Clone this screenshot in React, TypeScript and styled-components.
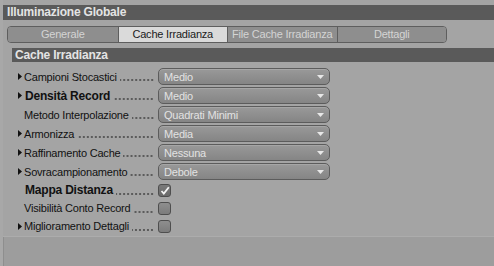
import styled, { createGlobalStyle } from "styled-components";

const Global = createGlobalStyle`
    body {
        margin: 0;
        background: #9d9d9d;
        font-family: "Liberation Sans", Arial, sans-serif;
        font-size: 11px;
        letter-spacing: -0.2px;
    }
`

const tabs = ["Generale", "Cache Irradianza", "File Cache Irradianza", "Dettagli"]

type Field =
    | { label: string; bold?: boolean; arrow?: boolean; kind: "select"; value: string }
    | { label: string; bold?: boolean; arrow?: boolean; kind: "check"; checked: boolean }

const fields: Field[] = [
    { label: "Campioni Stocastici", arrow: true, kind: "select", value: "Medio" },
    { label: "Densità Record", arrow: true, bold: true, kind: "select", value: "Medio" },
    { label: "Metodo Interpolazione", kind: "select", value: "Quadrati Minimi" },
    { label: "Armonizza", arrow: true, kind: "select", value: "Media" },
    { label: "Raffinamento Cache", arrow: true, kind: "select", value: "Nessuna" },
    { label: "Sovracampionamento", arrow: true, kind: "select", value: "Debole" },
    { label: "Mappa Distanza", bold: true, kind: "check", checked: true },
    { label: "Visibilità Conto Record", kind: "check", checked: false },
    { label: "Miglioramento Dettagli", arrow: true, kind: "check", checked: false },
]

const App = () => {
    return (<Frame>
        <Global />
        <TopStrip />
        <TitleBar>Illuminazione Globale</TitleBar>
        <Panel>
            <TabBar>
                {tabs.map((t, i) => <Tab key={t} $active={i === 1}>{t}</Tab>)}
            </TabBar>
            <Section>Cache Irradianza</Section>
            <Rows>
                {fields.map(f => (
                    <Row key={f.label} $tall={f.kind === "select"}>
                        <LabelCell>
                            <Arrow>{f.arrow ? <svg width="4" height="7" viewBox="0 0 4 7"><path d="M0 0 L4 3.5 L0 7 Z" fill="#111" /></svg> : null}</Arrow>
                            <Label $bold={f.bold}>{f.label}</Label>
                            <Leader />
                        </LabelCell>
                        {f.kind === "select"
                            ? <Select>
                                <span>{f.value}</span>
                                <svg width="7" height="4" viewBox="0 0 7 4"><path d="M0 0 L7 0 L3.5 4 Z" fill="#e8e8e8" /></svg>
                            </Select>
                            : <Check $on={f.checked}>
                                {f.checked ? <svg width="10" height="9" viewBox="0 0 10 9"><path d="M1.5 5 L3.8 7.5 L8.8 1.2" stroke="#f4f4f4" strokeWidth="1.8" fill="none" /></svg> : null}
                            </Check>}
                    </Row>
                ))}
            </Rows>
        </Panel>
    </Frame>)
}

const Frame = styled.div`
    width: 494px;
    height: 266px;
    display: flex;
    flex-direction: column;
    border-left: 3px solid #a8a8a8;
    box-shadow: inset 1px 0 0 #8e8e8e;
    box-sizing: border-box;
    overflow: hidden;
`

const TopStrip = styled.div`
    height: 5px;
    background: #a4a4a4;
`

const TitleBar = styled.div`
    height: 15px;
    line-height: 15px;
    background: #5a5a5a;
    color: #e4e4e4;
    font-weight: bold;
    font-size: 12px;
    padding-left: 4px;
`

const Panel = styled.div`
    background: #a4a4a4;
    height: 217px;
    padding-top: 6px;
    box-sizing: border-box;
    border-bottom: 1px solid #acacac;
`

const TabBar = styled.div`
    margin-left: 4px;
    width: 440px;
    height: 17px;
    display: grid;
    grid-template-columns: repeat(4, 1fr);
    border: 1px solid #5e5e5e;
    border-radius: 4px;
    overflow: hidden;
    box-sizing: border-box;
`

const Tab = styled.div<{ $active?: boolean }>`
    background: ${p => p.$active ? "#dadada" : "#8e8e8e"};
    color: ${p => p.$active ? "#1a1a1a" : "#d4d4d4"};
    text-align: center;
    line-height: 15px;
    white-space: nowrap;
    border-left: 1px solid #5e5e5e;
    &:first-child { border-left: none; }
`

const Section = styled.div`
    margin: 5px 0 0 9px;
    height: 14px;
    line-height: 14px;
    background: #5a5a5a;
    color: #e4e4e4;
    font-weight: bold;
    font-size: 12px;
    padding-left: 3px;
`

const Rows = styled.div`
    padding: 5px 0 0 15px;
    display: flex;
    flex-direction: column;
`

const Row = styled.div<{ $tall?: boolean }>`
    height: ${p => p.$tall ? 19 : 18}px;
    display: flex;
    align-items: center;
`

const LabelCell = styled.div`
    width: 140px;
    display: flex;
    align-items: center;
`

const Arrow = styled.span`
    width: 6px;
    display: flex;
    align-items: center;
`

const Label = styled.span<{ $bold?: boolean }>`
    color: #111;
    font-weight: ${p => p.$bold ? "bold" : "normal"};
    font-size: ${p => p.$bold ? 12 : 11}px;
    white-space: nowrap;
    padding-left: ${p => p.$bold ? 1 : 0}px;
`

const Leader = styled.span`
    flex: 1;
    height: 2px;
    margin: 7px 4px 0 3px;
    background-image: radial-gradient(circle, #333 0.6px, transparent 0.9px);
    background-size: 4px 2px;
    background-position: right;
    background-repeat: repeat-x;
`

const Select = styled.div`
    width: 172px;
    height: 17px;
    box-sizing: border-box;
    border: 1px solid #5c5c5c;
    border-radius: 5px;
    background: linear-gradient(#999, #858585);
    box-shadow: inset 0 1px 0 #a6a6a6;
    color: #e2e2e2;
    display: flex;
    align-items: center;
    justify-content: space-between;
    padding: 0 5px;
`

const Check = styled.div<{ $on?: boolean }>`
    width: 13px;
    height: 13px;
    box-sizing: border-box;
    border: 1px solid #4e4e4e;
    border-radius: 3px;
    background: ${p => p.$on ? "linear-gradient(#7a7a7a, #6a6a6a)" : "linear-gradient(#8e8e8e, #7c7c7c)"};
    display: flex;
    align-items: center;
    justify-content: center;
`

export default App
